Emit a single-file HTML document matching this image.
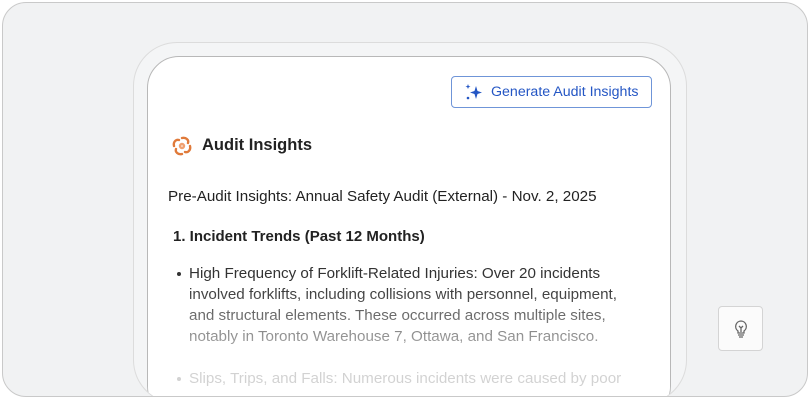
<!DOCTYPE html>
<html><head><style>
html,body{margin:0;width:811px;height:400px;overflow:hidden}
body{background:#fff;font-family:"Liberation Sans",sans-serif;position:relative}
.frame{position:absolute;left:2px;top:2px;width:804px;height:393px;border:1.5px solid #c9c9c9;border-radius:24px;background:#f1f2f3;overflow:hidden}
.shell{position:absolute;left:130px;top:39px;width:552px;height:360px;border:1.5px solid #dcdcdc;border-radius:44px;background:#f4f5f6;overflow:hidden}
.card{position:absolute;left:13px;top:13px;width:522px;height:360px;border:1.5px solid #b8b8b8;border-radius:32px;background:#fff;overflow:hidden}
.btn{position:absolute;left:303px;top:19px;width:201px;height:32px;border:1.5px solid #6f95d8;border-radius:4px;color:#2456c4;font-size:14.2px;line-height:31px;box-sizing:border-box}
.btn span{position:absolute;left:39px;top:0}
.title{position:absolute;left:54px;top:79px;font-size:16.5px;color:#222;font-weight:bold}
.t{position:absolute;font-size:15.2px;color:#222;white-space:nowrap}
.bul{position:absolute;left:41px;top:206px;font-size:15.2px;line-height:21px;color:#333;width:455px}
.bul div{position:relative}
.bul div:before{content:"";position:absolute;left:-12px;top:9px;width:4px;height:4px;border-radius:50%;background:#333}
.fade{position:absolute;left:0;top:228px;width:522px;height:140px;background:linear-gradient(rgba(255,255,255,0),rgba(255,255,255,.78) 60%)}
.bulb{position:absolute;left:718px;top:306px;width:45px;height:45px;border:1.5px solid #d4d4d4;border-radius:4px;background:#fbfbfb;box-sizing:border-box}
</style></head><body>
<div class="frame">
<div class="shell"><div class="card">
 <div class="btn"><svg style="position:absolute;left:12px;top:6px" width="20" height="18" viewBox="0 0 20 18"><path d="M12 3 L13.5 8 L18 9.5 L13.5 11 L12 16 L10.5 11 L6 9.5 L10.5 8Z" fill="#2456c4"/><path d="M4 1 L4.7 3 L6.5 3.6 L4.7 4.2 L4 6 L3.3 4.2 L1.5 3.6 L3.3 3Z" fill="#2456c4"/><circle cx="4" cy="15" r="1.3" fill="#2456c4"/></svg><span>Generate Audit Insights</span></div>
 <svg style="position:absolute;left:22px;top:77px" width="24" height="24" viewBox="0 0 24 24" fill="none" stroke="#e07a3a" stroke-width="2.4" stroke-linecap="round"><path d="M12 4 C16 3 19 6 18 9"/><path d="M20 12 C21 16 18 19 15 18"/><path d="M12 20 C8 21 5 18 6 15"/><path d="M4 12 C3 8 6 5 9 6"/><circle cx="12" cy="12" r="2" stroke="#f0a070"/></svg>
 <div class="title">Audit Insights</div>
 <div class="t" style="left:20px;top:131px">Pre-Audit Insights: Annual Safety Audit (External) - Nov. 2, 2025</div>
 <div class="t" style="left:25px;top:171px;font-weight:bold;font-size:15px">1. Incident Trends (Past 12 Months)</div>
 <div class="bul"><div>High Frequency of Forklift-Related Injuries: Over 20 incidents involved forklifts, including collisions with personnel, equipment, and structural elements. These occurred across multiple sites, notably in Toronto Warehouse 7, Ottawa, and San Francisco.</div><div style="margin-top:21px">Slips, Trips, and Falls: Numerous incidents were caused by poor</div></div>
 <div class="fade"></div>
</div></div>
</div>
<div class="bulb"><svg style="position:absolute;left:13px;top:12px" width="18" height="20" viewBox="0 0 18 20" fill="none" stroke="#666" stroke-width="1.3"><path d="M9 2 a5.5 5.5 0 0 0-3 10 v2 h6 v-2 a5.5 5.5 0 0 0-3-10z"/><path d="M6 16 h6 M7 18 h4 M7 7 l2 2 2-2 M9 9 v4"/></svg></div>
</body></html>
